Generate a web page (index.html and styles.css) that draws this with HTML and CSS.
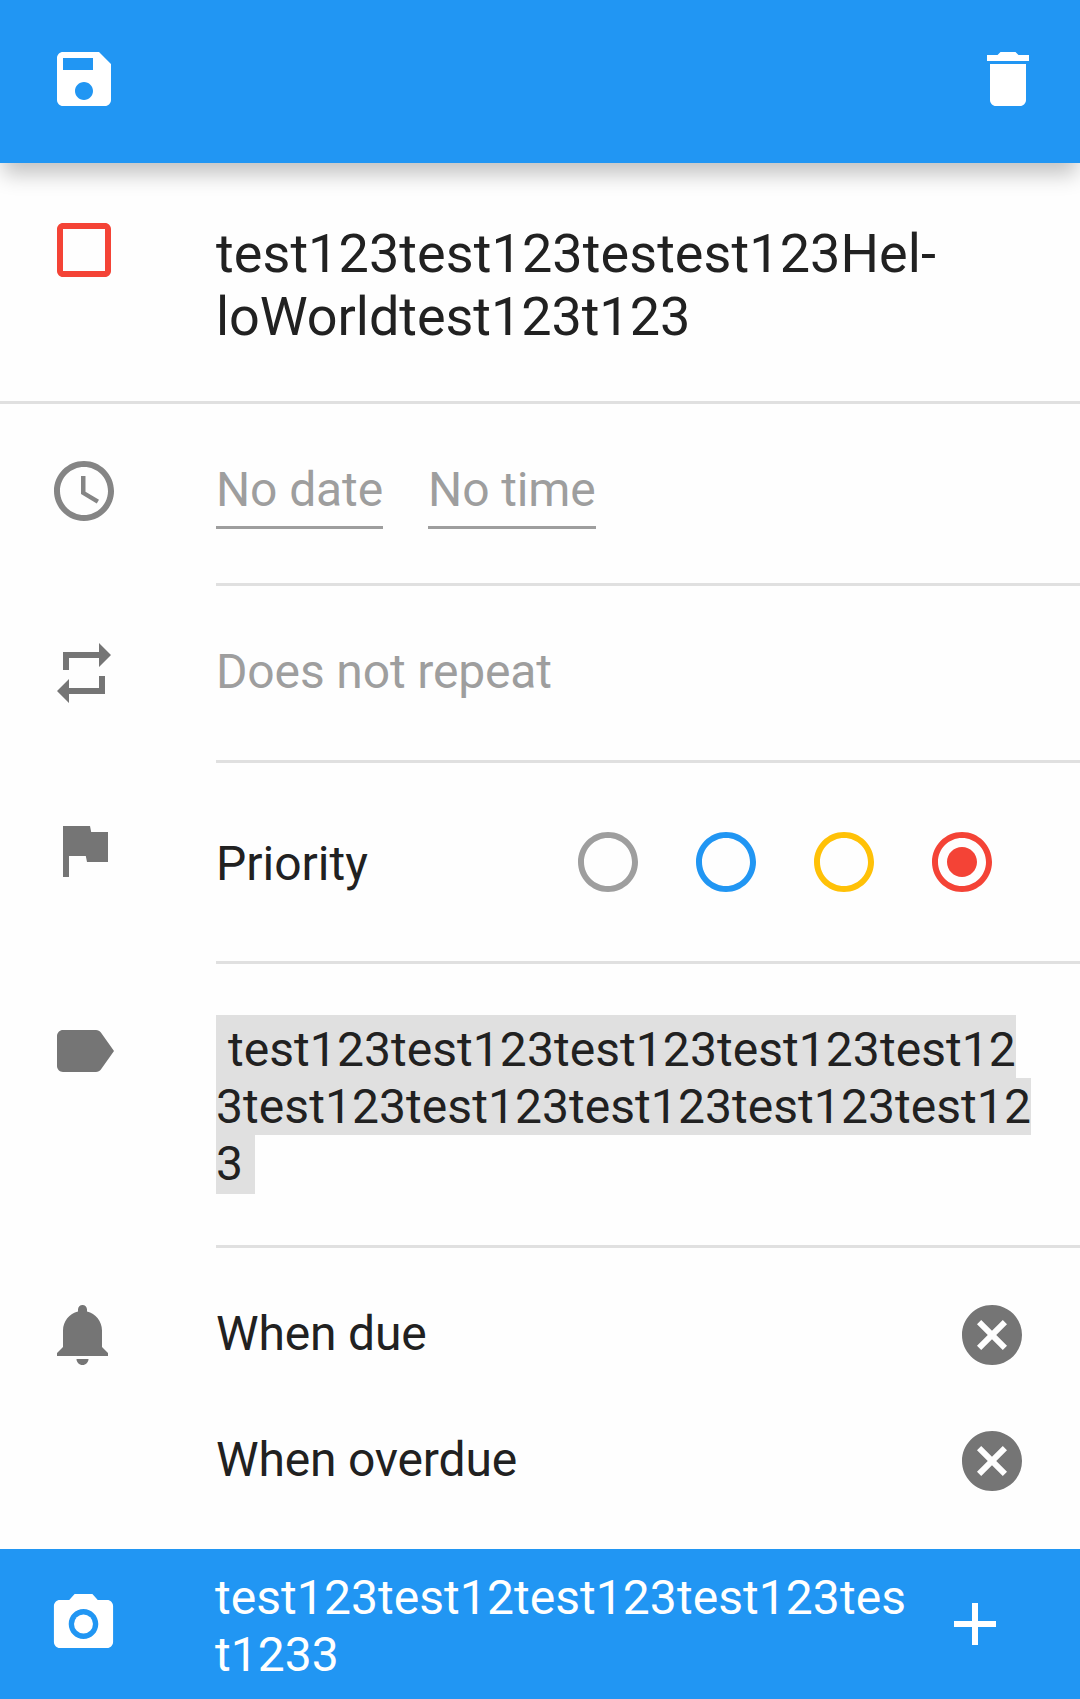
FILE: index.html
```html
<!DOCTYPE html>
<html lang="en">
<head>
<meta charset="utf-8">
<title>Edit task</title>
<link rel="stylesheet" href="styles.css">
</head>
<body>
<header class="toolbar">
  <svg class="icon" viewBox="0 0 24 24"><path d="M17 3H5c-1.11 0-2 .9-2 2v14c0 1.1.89 2 2 2h14c1.1 0 2-.9 2-2V7l-4-4zm-5 16c-1.66 0-3-1.34-3-3s1.34-3 3-3 3 1.34 3 3-1.34 3-3 3zm3-10H5V5h10v4z"/></svg>
  <svg class="icon" viewBox="0 0 24 24"><path d="M6 19c0 1.1.9 2 2 2h8c1.1 0 2-.9 2-2V7H6v12zM19 4h-3.5l-1-1h-5l-1 1H5v2h14V4z"/></svg>
</header>
<main class="form">
  <section class="row row-title">
    <svg class="icon lead red" viewBox="0 0 24 24"><path d="M19 5v14H5V5h14m0-2H5c-1.1 0-2 .9-2 2v14c0 1.1.9 2 2 2h14c1.1 0 2-.9 2-2V5c0-1.1-.9-2-2-2z"/></svg>
    <h1 class="content title"><span class="loose">test123test123testest123Hel-</span><br><span class="snug">loWorldtest123t123</span></h1>
  </section>
  <section class="row row-date">
    <svg class="icon lead clock" viewBox="0 0 24 24"><path d="M11.99 2C6.47 2 2 6.48 2 12s4.47 10 9.99 10C17.52 22 22 17.52 22 12S17.52 2 11.99 2zM12 20c-4.42 0-8-3.58-8-8s3.58-8 8-8 8 3.58 8 8-3.58 8-8 8zm.5-13H11v6l5.25 3.15.75-1.23-4.5-2.67z"/></svg>
    <div class="content dates"><span class="field">No date</span><span class="field">No time</span></div>
  </section>
  <section class="row row-repeat">
    <svg class="icon lead" viewBox="0 0 24 24"><path d="M7 7h10v3l4-4-4-4v3H5v6h2V7zm10 10H7v-3l-4 4 4 4v-3h12v-6h-2v4z"/></svg>
    <div class="content hint">Does not repeat</div>
  </section>
  <section class="row row-priority">
    <svg class="icon lead" viewBox="0 0 24 24"><path d="M14.4 6L14 4H5v17h2v-7h5.6l.4 2h7V6z"/></svg>
    <div class="content priority">
      <span class="name">Priority</span>
      <div class="levels">
        <svg class="icon gray" viewBox="0 0 24 24"><path d="M12 2C6.48 2 2 6.48 2 12s4.48 10 10 10 10-4.48 10-10S17.52 2 12 2zm0 18c-4.42 0-8-3.58-8-8s3.58-8 8-8 8 3.58 8 8-3.58 8-8 8z"/></svg>
        <svg class="icon blue" viewBox="0 0 24 24"><path d="M12 2C6.48 2 2 6.48 2 12s4.48 10 10 10 10-4.48 10-10S17.52 2 12 2zm0 18c-4.42 0-8-3.58-8-8s3.58-8 8-8 8 3.58 8 8-3.58 8-8 8z"/></svg>
        <svg class="icon amber" viewBox="0 0 24 24"><path d="M12 2C6.48 2 2 6.48 2 12s4.48 10 10 10 10-4.48 10-10S17.52 2 12 2zm0 18c-4.42 0-8-3.58-8-8s3.58-8 8-8 8 3.58 8 8-3.58 8-8 8z"/></svg>
        <svg class="icon red" viewBox="0 0 24 24"><path d="M12 7c-2.76 0-5 2.24-5 5s2.24 5 5 5 5-2.24 5-5-2.24-5-5-5zm0-5C6.48 2 2 6.48 2 12s4.48 10 10 10 10-4.48 10-10S17.52 2 12 2zm0 18c-4.42 0-8-3.58-8-8s3.58-8 8-8 8 3.58 8 8-3.58 8-8 8z"/></svg>
      </div>
    </div>
  </section>
  <section class="row row-label">
    <svg class="icon lead" viewBox="0 0 24 24"><path d="M17.63 5.84C17.27 5.33 16.67 5 16 5L5 5.01C3.9 5.01 3 5.9 3 7v10c0 1.1.9 1.99 2 1.99L16 19c.67 0 1.27-.33 1.63-.84L22 12l-4.37-6.16z"/></svg>
    <div class="content tags">
      <span class="tag tag-first"> test123test123test123test123test12</span>
      <span class="tag">3test123test123test123test123test12</span>
      <span class="tag tag-last">3 </span>
    </div>
  </section>
  <section class="row row-alerts">
    <svg class="icon lead" viewBox="0 0 24 24"><path d="M11.5 22c1.1 0 2-.9 2-2h-4c0 1.1.9 2 2 2zm6.5-6v-5.5c0-3.07-2.13-5.64-5-6.32V3.5c0-.83-.67-1.5-1.5-1.5S10 2.67 10 3.5v.68c-2.87.68-5 3.25-5 6.32V16l-2 2v1h17v-1l-2-2z"/></svg>
    <div class="content alerts">
      <div class="alert"><span>When due</span><svg class="icon" viewBox="0 0 24 24"><path d="M12 2C6.47 2 2 6.47 2 12s4.47 10 10 10 10-4.47 10-10S17.53 2 12 2zm5 13.59L15.59 17 12 13.41 8.41 17 7 15.59 10.59 12 7 8.41 8.41 7 12 10.59 15.59 7 17 8.41 13.41 12 17 15.59z"/></svg></div>
      <div class="alert"><span>When overdue</span><svg class="icon" viewBox="0 0 24 24"><path d="M12 2C6.47 2 2 6.47 2 12s4.47 10 10 10 10-4.47 10-10S17.53 2 12 2zm5 13.59L15.59 17 12 13.41 8.41 17 7 15.59 10.59 12 7 8.41 8.41 7 12 10.59 15.59 7 17 8.41 13.41 12 17 15.59z"/></svg></div>
    </div>
  </section>
</main>
<footer class="comment-bar">
  <svg class="icon camera" viewBox="0 0 24 24" preserveAspectRatio="none"><circle cx="12" cy="12" r="3.2"/><path d="M9 2L7.17 4H4c-1.1 0-2 .9-2 2v12c0 1.1.9 2 2 2h16c1.1 0 2-.9 2-2V6c0-1.1-.9-2-2-2h-3.17L15 2H9zm3 15c-2.76 0-5-2.24-5-5s2.24-5 5-5 5 2.24 5 5-2.24 5-5 5z"/></svg>
  <p class="comment">test123test12test123test123tes<br>t1233</p>
  <svg class="icon" viewBox="0 0 24 24"><path d="M19 13h-6v6h-2v-6H5v-2h6V5h2v6h6v2z"/></svg>
</footer>
</body>
</html>
```
FILE: styles.css
```css
* { box-sizing: border-box; }

body {
  margin: 0;
  height: 1699px;
  display: flex;
  flex-direction: column;
  overflow: hidden;
  background: #fefefe;
  color: #212121;
  font: 48px/57px Roboto, sans-serif;
}

.icon {
  display: block;
  flex: none;
  width: 72px;
  height: 72px;
  fill: currentColor;
}

.gray { color: #9e9e9e; }
.blue { color: #2196f3; }
.amber { color: #ffc107; }

.toolbar {
  flex: none;
  height: 163px;
  padding: 43px 36px 0 48px;
  display: flex;
  justify-content: space-between;
  background: #2196f3;
  color: #fff;
  box-shadow: 0 14px 20px -3px rgba(0, 0, 0, .24);
}

.form {
  flex: 1;
  display: flex;
  flex-direction: column;
}

.row { display: flex; flex: none; }

.lead {
  margin: 51px 96px 0 48px;
  color: #757575;
}

.clock { color: #858585; }
.lead.red, .red { color: #f44336; }

.content {
  flex: 1;
  min-width: 0;
  border-bottom: 3px solid #e0e0e0;
}

.row-title { height: 241px; border-bottom: 3px solid #e0e0e0; }

.title {
  margin: 0;
  padding-top: 59px;
  border: 0;
  font-size: 54px;
  line-height: 63px;
  font-weight: 400;
  white-space: nowrap;
}

.loose { letter-spacing: .07px; }
.snug { letter-spacing: -.06px; }

.row-date { height: 182px; }

.dates {
  display: flex;
  align-items: flex-start;
  gap: 45px;
  padding-top: 57px;
  color: #9e9e9e;
  letter-spacing: -.12px;
}

.field { padding-bottom: 8px; border-bottom: 3px solid #9e9e9e; }

.row-repeat { height: 177px; }
.hint { padding-top: 57px; color: #9e9e9e; letter-spacing: -.14px; }

.row-priority { height: 201px; }

.priority {
  display: flex;
  justify-content: space-between;
  align-items: flex-start;
  padding: 63px 82px 0 0;
}

.name { padding-top: 9px; }
.levels { display: flex; gap: 46px; }

.row-label { height: 284px; }

.tags {
  display: flex;
  flex-direction: column;
  align-items: flex-start;
  padding-top: 51px;
  letter-spacing: .06px;
}

.tag { background: #e0e0e0; white-space: pre; }
.tag-first { padding-top: 6px; }
.tag-last { padding-bottom: 2px; }

.row-alerts { flex: 1; }

.alerts {
  display: flex;
  flex-direction: column;
  gap: 54px;
  padding: 51px 52px 0 0;
  border: 0;
  letter-spacing: -.18px;
}

.alert {
  display: flex;
  justify-content: space-between;
  align-items: center;
  height: 72px;
}

.alert span { padding-bottom: 3px; }
.alert .icon { color: #757575; }

.comment-bar {
  flex: none;
  height: 150px;
  display: flex;
  align-items: flex-start;
  padding: 39px 69px 0 48px;
  background: #2196f3;
  color: #fff;
}

.camera { width: 71px; }

.comment {
  flex: 1;
  margin: -19px 0 0 96px;
  white-space: nowrap;
  letter-spacing: .06px;
}
```
